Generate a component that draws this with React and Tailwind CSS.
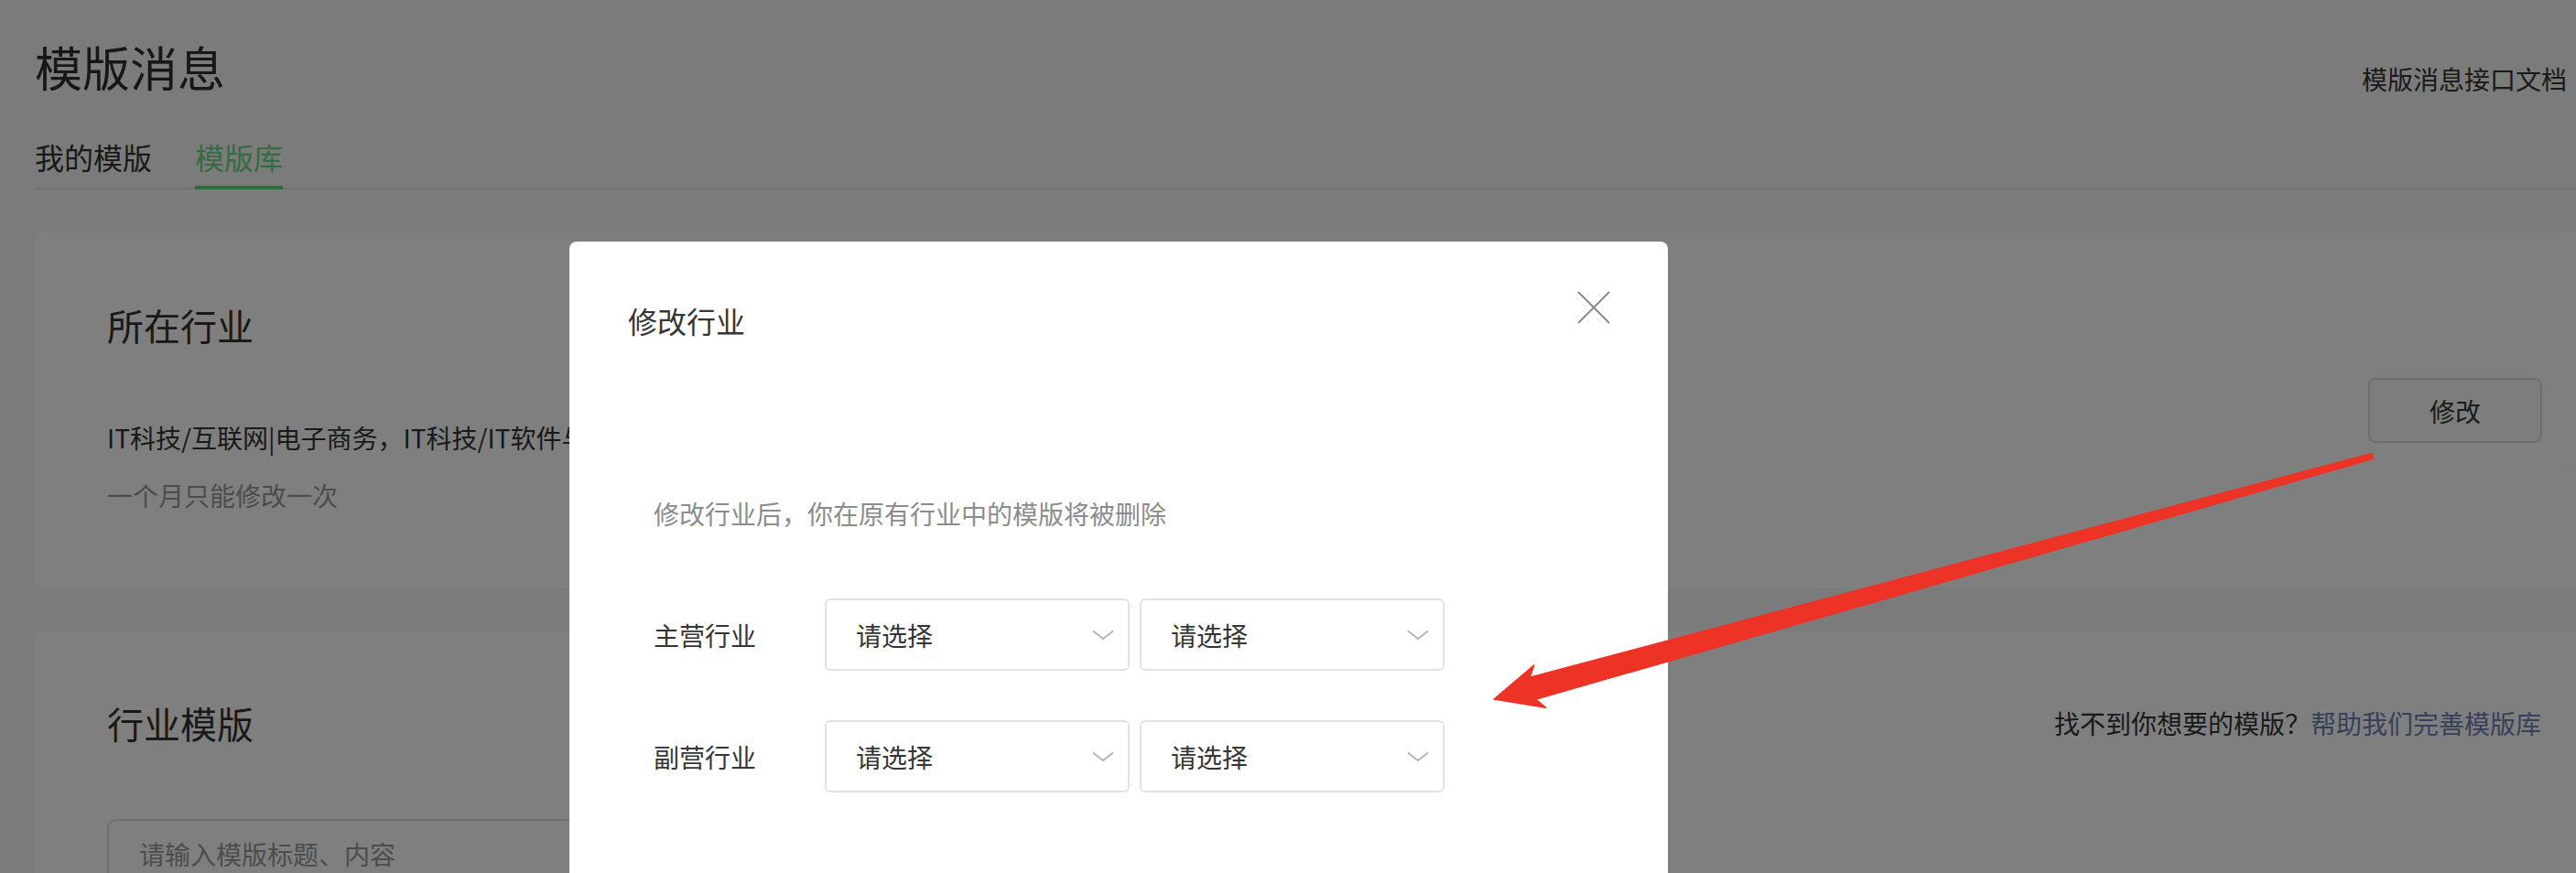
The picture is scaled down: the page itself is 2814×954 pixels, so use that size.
import React from "react";

// chevron used inside the select boxes
function Chevron() {
    return (
        <svg width="24" height="12" viewBox="0 0 24 12" fill="none">
            <path d="M1 1.5 L12 10 L23 1.5" stroke="#b2b2b2" strokeWidth="1.8" />
        </svg>
    );
}

function Select() {
    return (
        <div className="w-[333px] h-[79px] border-2 border-[#e0e4e8] rounded-[6px] flex items-center justify-between pl-[32px] pr-[15px] bg-white">
            <span className="text-[28px] leading-none text-[#353535]">请选择</span>
            <Chevron />
        </div>
    );
}

function SelectRow({ label, className }) {
    return (
        <div className={"flex items-center " + className}>
            <div className="w-[187px] text-[28px] leading-none text-[#353535]">{label}</div>
            <div className="flex gap-[11px]">
                <Select />
                <Select />
            </div>
        </div>
    );
}

export default function App() {
    return (
        <div className="relative h-[954px] w-full overflow-hidden bg-[#f6f6f6] font-['Noto_Sans_CJK_SC','Noto_Sans',sans-serif]">
            {/* Page */}
            <div className="pl-[38px]">
                <div className="flex justify-between items-start">
                    <h1 className="mt-[47px] text-[52px] leading-none font-normal text-[#2e2e2e]">模版消息</h1>
                    <a className="mt-[72px] mr-[10px] text-[28px] leading-none text-[#353535]">模版消息接口文档</a>
                </div>

                {/* Tabs */}
                <div className="mt-[55px] flex gap-[47px] border-b-2 border-[#e2e2e2]">
                    <div className="pb-[16px] mb-[-2px] border-b-4 border-transparent text-[32px] leading-none text-[#333]">我的模版</div>
                    <div className="pb-[16px] mb-[-2px] border-b-4 border-[#5bd67a] text-[32px] leading-none text-[#6ad884]">模版库</div>
                </div>

                {/* Industry card */}
                <div className="mt-[47px] h-[389px] bg-white rounded-l-[10px] pl-[79px] pr-[37px] flex justify-between items-start">
                    <div className="pt-[81px]">
                        <h2 className="text-[40px] leading-none font-normal text-[#333]">所在行业</h2>
                        <p className="mt-[89px] text-[28px] leading-none text-[#333]">IT科技/互联网|电子商务，IT科技/IT软件与服务</p>
                        <p className="mt-[35px] text-[28px] leading-none text-[#999]">一个月只能修改一次</p>
                    </div>
                    <button className="mt-[159px] w-[190px] h-[71px] rounded-[8px] border-2 border-[#dcdcdc] bg-[#fafafa] text-[28px] leading-none text-[#333]">
                        修改
                    </button>
                </div>

                {/* Template card */}
                <div className="mt-[47px] h-[400px] bg-white rounded-l-[10px] pl-[79px] pr-[38px]">
                    <div className="pt-[80px] flex justify-between items-center">
                        <h2 className="text-[40px] leading-none font-normal text-[#333]">行业模版</h2>
                        <div className="text-[28px] leading-none text-[#333]">
                            找不到你想要的模版？<span className="text-[#6f81b2]">帮助我们完善模版库</span>
                        </div>
                    </div>
                    <div className="mt-[85px] w-[1000px] h-[76px] border-2 border-[#dcdcdc] rounded-[10px] flex items-center pl-[33px] text-[28px] leading-none text-[#999]">
                        请输入模版标题、内容
                    </div>
                </div>
            </div>

            {/* Mask */}
            <div className="absolute inset-0 bg-black/50"></div>

            {/* Dialog */}
            <div className="absolute left-[622px] top-[264px] w-[1200px] h-[760px] bg-white rounded-[8px]">
                <div className="flex justify-between items-start pt-[54px] pl-[64px] pr-[63px]">
                    <h3 className="mt-[16px] text-[32px] leading-none font-normal text-[#353535]">修改行业</h3>
                    <svg width="36" height="36" viewBox="0 0 36 36" fill="none">
                        <path d="M1 1 L35 35 M35 1 L1 35" stroke="#8a8a8a" strokeWidth="2" />
                    </svg>
                </div>
                <div className="pl-[92px]">
                    <p className="mt-[181px] text-[28px] leading-none text-[#8c8c8c]">修改行业后，你在原有行业中的模版将被删除</p>
                    <SelectRow label="主营行业" className="mt-[79px]" />
                    <SelectRow label="副营行业" className="mt-[54px]" />
                </div>
            </div>

            {/* Red annotation arrow */}
            <svg className="absolute left-0 top-0 pointer-events-none" width="2814" height="954" viewBox="0 0 2814 954">
                <polygon
                    points="1632,764 1675.7,727 1671.1,740.2 2591,495.5 2592.6,501.3 1677.7,764.2 1688.5,773.2"
                    fill="#ec3326"
                    stroke="#ec3326"
                    strokeWidth="1.5"
                    strokeLinejoin="round"
                />
            </svg>
        </div>
    );
}
